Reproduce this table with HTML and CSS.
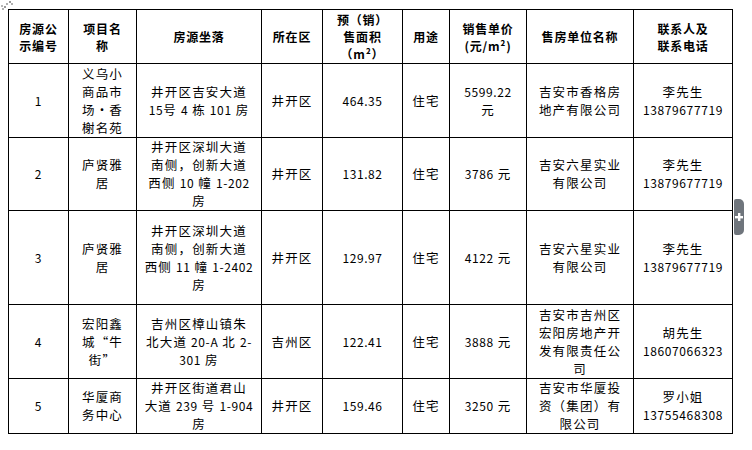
FILE: index.html
```html
<!DOCTYPE html>
<html lang="zh-CN">
<head>
<meta charset="utf-8">
<title>房源公示</title>
<link rel="stylesheet" href="styles.css">
</head>
<body>
<div class="page">
  <svg class="move-handle" width="14" height="12" viewBox="0 0 14 12" aria-hidden="true">
    <rect x="9" y="1" width="2" height="2" fill="#9a9a9a"/>
    <rect x="6" y="3" width="2" height="2" fill="#b0b0b0"/>
    <rect x="11" y="3" width="2" height="2" fill="#b0b0b0"/>
    <rect x="1" y="5" width="2" height="2" fill="#b8b8b8"/>
    <rect x="4" y="6" width="2" height="2" fill="#9a9a9a"/>
    <rect x="2" y="8" width="2" height="2" fill="#b0b0b0"/>
  </svg>
  <table class="grid">
    <colgroup>
      <col class="c1"><col class="c2"><col class="c3"><col class="c4"><col class="c5"><col class="c6"><col class="c7"><col class="c8"><col class="c9">
    </colgroup>
    <thead>
      <tr class="r-head">
        <th>房源公<br>示编号</th>
        <th>项目名<br>称</th>
        <th>房源坐落</th>
        <th>所在区</th>
        <th>预（销）<br>售面积<br>（m²）</th>
        <th>用途</th>
        <th>销售单价<br>(元/m²)</th>
        <th>售房单位名称</th>
        <th>联系人及<br>联系电话</th>
      </tr>
    </thead>
    <tbody>
      <tr class="r1">
        <td><span class="n">1</span></td>
        <td>义乌小<br>商品市<br>场·香<br>榭名苑</td>
        <td>井开区吉安大道<br><span class="n">15</span>号 <span class="n">4</span> 栋 <span class="n">101</span> 房</td>
        <td>井开区</td>
        <td><span class="n">464.35</span></td>
        <td>住宅</td>
        <td><span class="n">5599.22</span><br>元</td>
        <td>吉安市香格房<br>地产有限公司</td>
        <td>李先生<br><span class="n">13879677719</span></td>
      </tr>
      <tr class="r2">
        <td><span class="n">2</span></td>
        <td>庐贤雅<br>居</td>
        <td>井开区深圳大道<br>南侧，创新大道<br>西侧 <span class="n">10</span> 幢 <span class="n">1-202</span><br>房</td>
        <td>井开区</td>
        <td><span class="n">131.82</span></td>
        <td>住宅</td>
        <td><span class="n">3786</span> 元</td>
        <td>吉安六星实业<br>有限公司</td>
        <td>李先生<br><span class="n">13879677719</span></td>
      </tr>
      <tr class="r3">
        <td><span class="n">3</span></td>
        <td>庐贤雅<br>居</td>
        <td>井开区深圳大道<br>南侧，创新大道<br>西侧 <span class="n">11</span> 幢 <span class="n">1-2402</span><br>房</td>
        <td>井开区</td>
        <td><span class="n">129.97</span></td>
        <td>住宅</td>
        <td><span class="n">4122</span> 元</td>
        <td>吉安六星实业<br>有限公司</td>
        <td>李先生<br><span class="n">13879677719</span></td>
      </tr>
      <tr class="r4">
        <td><span class="n">4</span></td>
        <td>宏阳鑫<br>城“牛<br>街”</td>
        <td>吉州区樟山镇朱<br>北大道 <span class="n">20-A</span> 北 <span class="n">2-</span><br><span class="n">301</span> 房</td>
        <td>吉州区</td>
        <td><span class="n">122.41</span></td>
        <td>住宅</td>
        <td><span class="n">3888</span> 元</td>
        <td>吉安市吉州区<br>宏阳房地产开<br>发有限责任公<br>司</td>
        <td>胡先生<br><span class="n">18607066323</span></td>
      </tr>
      <tr class="r5">
        <td><span class="n">5</span></td>
        <td>华厦商<br>务中心</td>
        <td>井开区街道君山<br>大道 <span class="n">239</span> 号 <span class="n">1-904</span><br>房</td>
        <td>井开区</td>
        <td><span class="n">159.46</span></td>
        <td>住宅</td>
        <td><span class="n">3250</span> 元</td>
        <td>吉安市华厦投<br>资（集团）有<br>限公司</td>
        <td>罗小姐<br><span class="n">13755468308</span></td>
      </tr>
    </tbody>
  </table>
  <div class="side-tab" aria-label="展开">
    <svg width="10" height="10" viewBox="0 0 10 10" aria-hidden="true">
      <rect x="4" y="1" width="2.4" height="8" fill="#fff"/>
      <rect x="1" y="4" width="8" height="2.4" fill="#fff"/>
    </svg>
  </div>
</div>
</body>
</html>
```

FILE: styles.css
```css
html, body {
  margin: 0;
  padding: 0;
  background: #fff;
}

.page {
  position: relative;
  width: 752px;
  height: 450px;
  padding: 9px 0 0 8px;
  box-sizing: border-box;
  font-family: "Noto Sans CJK SC", "Noto Sans", sans-serif;
  color: #000;
}

.move-handle {
  position: absolute;
  left: 0;
  top: 0;
}

.grid {
  border-collapse: collapse;
  table-layout: fixed;
  width: 725px;
}

.c1 { width: 60px; }
.c2 { width: 68px; }
.c3 { width: 125px; }
.c4 { width: 61px; }
.c5 { width: 80px; }
.c6 { width: 47px; }
.c7 { width: 77px; }
.c8 { width: 107px; }
.c9 { width: 99px; }

.grid th,
.grid td {
  border: 1px solid #000;
  padding: 0;
  text-align: center;
  vertical-align: middle;
  overflow: hidden;
}

.grid th {
  font-size: 12px;
  font-weight: 700;
  line-height: 17px;
  letter-spacing: 0.8px;
}

.grid td {
  font-size: 12.5px;
  font-weight: 400;
  line-height: 18px;
  letter-spacing: 1.2px;
}

.grid .n {
  font-size: 12px;
  letter-spacing: 0.6px;
}

.r-head { height: 54px; }
.r1 { height: 74px; }
.r2 { height: 72px; }
.r3 { height: 94px; }
.r4 { height: 74px; }
.r5 { height: 54px; }

.side-tab {
  position: absolute;
  left: 734px;
  top: 199px;
  width: 10px;
  height: 36px;
  background: #6f757c;
  border-radius: 2px 5px 5px 2px;
  display: flex;
  align-items: center;
  justify-content: center;
}
```
